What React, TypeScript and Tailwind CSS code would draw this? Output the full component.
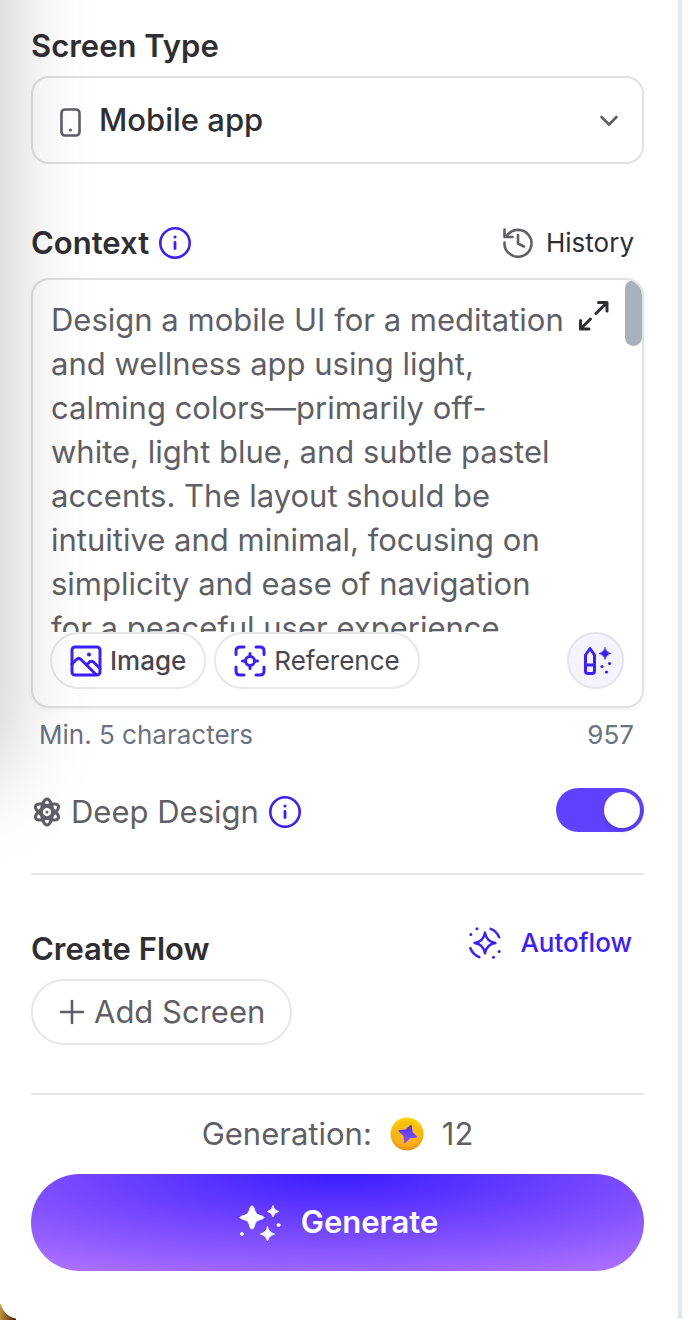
import { useState } from 'react';
import type { ReactNode } from 'react';

const initialPrompt =
  'Design a mobile UI for a meditation and wellness app using light, calming colors—primarily off-white, light blue, and subtle pastel accents. The layout should be intuitive and minimal, focusing on simplicity and ease of navigation for a peaceful user experience.';

type IconProps = {
  size: number;
  className?: string;
  strokeWidth?: number;
  children: ReactNode;
};

function Icon({ size, className = '', strokeWidth = 3, children }: IconProps) {
  return (
    <svg
      width={size}
      height={size}
      viewBox={`0 0 ${size} ${size}`}
      fill="none"
      stroke="currentColor"
      strokeWidth={strokeWidth}
      strokeLinecap="round"
      strokeLinejoin="round"
      aria-hidden="true"
      className={`shrink-0 ${className}`}
    >
      {children}
    </svg>
  );
}

function InfoButton({ label }: { label: string }) {
  return (
    <button type="button" aria-label={label} className="text-[#3d1eff]">
      <Icon size={34}>
        <circle cx="17" cy="17" r="14.700" strokeWidth="2.600" />
        <path d="M17 16.500v6" strokeWidth="2.800" />
        <circle cx="17" cy="11" r="1.600" fill="currentColor" stroke="none" />
      </Icon>
    </button>
  );
}

export default function App() {
  const [prompt, setPrompt] = useState(initialPrompt);
  const [deepDesign, setDeepDesign] = useState(true);

  return (
    <div className="relative bg-white pr-[10px] pb-px font-['Inter',sans-serif] text-[#5f5f66]">
      {/* Backdrop peeking out behind the rounded corner */}
      <div className="absolute bottom-0 left-0 h-4 w-4 bg-gradient-to-r from-[#c09540] to-[#4a1c0c]" />

      <main className="relative overflow-hidden rounded-bl-[20px] border-r-4 border-[#e1e8f0] bg-white pt-[26px] pr-[34px] pb-12 pl-[31px]">
        {/* Shadow cast by the neighbouring drawer */}
        <div className="pointer-events-none absolute -top-48 -left-24 z-10 h-[968px] w-24 shadow-[0_0_90px_rgba(0,0,0,0.25)]" />

        <label htmlFor="screen-type" className="block text-[31px] leading-10 font-semibold text-[#2e2e33]">
          Screen Type
        </label>
        <div className="relative mt-[10px]">
          <Icon size={32} strokeWidth={2.6} className="absolute top-[30px] left-6">
            <rect x="6.500" y="3.500" width="18" height="26" rx="3.500" />
            <circle cx="15.500" cy="24" r="1.500" fill="currentColor" stroke="none" />
          </Icon>
          <select
            id="screen-type"
            className="h-[88px] w-full appearance-none rounded-[18px] border-2 border-[#e1e1e3] bg-transparent pr-16 pl-[66px] text-[31px] font-medium text-[#2e2e33]"
          >
            <option>Mobile app</option>
          </select>
          <Icon size={24} strokeWidth={2.6} className="pointer-events-none absolute top-8 right-[23px]">
            <path d="m4.500 9 7.500 7.500L19.500 9" />
          </Icon>
        </div>

        <div className="mt-[59px] flex items-center justify-between pr-[10px]">
          <div className="flex items-center gap-[9px]">
            <label htmlFor="context" className="text-[31px] leading-10 font-semibold text-[#2e2e33]">
              Context
            </label>
            <InfoButton label="About context" />
          </div>
          <button type="button" className="flex items-center gap-3 text-[26px] leading-10 text-[#2e2e33]">
            <Icon size={32} className="text-[#5f5f66]" strokeWidth={2.6}>
              <path d="M2.500 15.500A13.500 13.500 0 1 0 5 8.500M2.500 2.500v7.500h8" />
              <path d="M16 8v8.500l6 3" />
            </Icon>
            History
          </button>
        </div>

        <div className="relative mt-[15px] overflow-hidden rounded-[18px] border-2 border-[#e1e1e3] shadow-[0_2px_4px_rgba(0,0,0,0.05)]">
          <textarea
            id="context"
            value={prompt}
            onChange={(e) => setPrompt(e.target.value)}
            className="block h-[352px] w-full resize-none overflow-hidden bg-transparent pt-[18px] pr-[72px] pl-[18px] text-[31px] leading-[44px] outline-none"
          />
          <button type="button" aria-label="Expand editor" className="absolute top-5 right-8 text-[#2e2e33]">
            <Icon size={32}>
              <path d="M20.500 2.500H29V11M29 2.500 18 13.500M2.500 20.500V29H11M2.500 29 12.500 19" />
            </Icon>
          </button>
          <span className="absolute top-0 right-0 h-[66px] w-[17px] rounded-full bg-[#a9b1ba]" />

          <div className="flex items-center gap-2 pr-[18px] pb-[17px] pl-[17px]">
            <button
              type="button"
              className="flex h-[57px] items-center gap-2 rounded-full border-2 border-[#e8e8ea] bg-white px-[18px] text-[26px] font-medium text-[#47474d]"
            >
              <Icon size={32} className="text-[#3d1eff]">
                <rect x="2" y="2" width="28" height="28" rx="3" />
                <path d="m2 19 4.500-4.500c1.500-1.500 3-1.500 4.500 0L26 29.500" />
                <path d="m17 19.500 2.500-2.500c1.200-1 2.600-1 4 0l6.500 6.500" />
                <circle cx="19" cy="9.500" r="2" fill="currentColor" stroke="none" />
              </Icon>
              Image
            </button>
            <button
              type="button"
              className="flex h-[57px] items-center gap-2 rounded-full border-2 border-[#e8e8ea] bg-white px-[18px] text-[26px] text-[#47474d]"
            >
              <Icon size={32} className="text-[#3d1eff]">
                <path d="M2 9.500V6q0-4 4-4h4M22 2h4q4 0 4 4v3.500M30 22v4q0 4-4 4h-4M10 30H6q-4 0-4-4v-4" />
                <circle cx="16" cy="16" r="4.500" />
                <path d="M16 8.500v3M16 20.500v3M8.500 16h3M20.500 16h3" />
              </Icon>
              Reference
            </button>
            <button
              type="button"
              aria-label="Enhance prompt"
              className="ml-auto flex h-[57px] w-[57px] items-center justify-center rounded-full border-2 border-[#e4e4e9] bg-[#f5f3ff] text-[#3d1eff]"
            >
              <Icon size={32}>
                <path d="M5.500 10 10 3.500l4.500 6.500v16q0 2.500-2.500 2.500H8q-2.500 0-2.500-2.500zM5.500 20h9" />
                <path
                  d="M25 2.500q1 4.800 6 6-5 1.200-6 6-1-4.800-6-6 5-1.200 6-6z"
                  fill="currentColor"
                  strokeWidth="0.500"
                />
                <g fill="currentColor" stroke="none">
                  <circle cx="22" cy="21.500" r="1.600" />
                  <circle cx="29.500" cy="18.500" r="1.600" />
                  <circle cx="26.500" cy="27" r="1.600" />
                </g>
              </Icon>
            </button>
          </div>
        </div>

        <div className="mt-[7px] flex justify-between pr-[10px] pl-2 text-[26px] leading-10 text-[#6b7280]">
          <span>Min. 5 characters</span>
          <span>957</span>
        </div>

        <div className="mt-[33px] flex h-11 items-center justify-between">
          <div className="flex items-center gap-[9px] self-end">
            <label htmlFor="deep-design" className="flex items-center gap-2 text-[31px] leading-10">
              <Icon size={32} strokeWidth={3}>
                <ellipse cx="16" cy="16" rx="5.500" ry="13" />
                <ellipse cx="16" cy="16" rx="5.500" ry="13" transform="rotate(60 16 16)" />
                <ellipse cx="16" cy="16" rx="5.500" ry="13" transform="rotate(120 16 16)" />
                <circle cx="16" cy="16" r="1.500" fill="currentColor" stroke="none" />
              </Icon>
              Deep Design
            </label>
            <InfoButton label="About deep design" />
          </div>
          <input
            id="deep-design"
            type="checkbox"
            role="switch"
            checked={deepDesign}
            onChange={(e) => setDeepDesign(e.target.checked)}
            className="flex h-11 w-[88px] appearance-none items-center rounded-full bg-gray-300 px-1 before:h-9 before:w-9 before:rounded-full before:bg-white before:shadow-md checked:justify-end checked:bg-[#5f41ff]"
          />
        </div>

        <hr className="mt-[41px] border-t-2 border-[#e7e7e9]" />

        <div className="mt-12 flex h-[46px] justify-between pr-3">
          <h2 className="self-end text-[31px] leading-10 font-semibold text-[#2e2e33]">Create Flow</h2>
          <button
            type="button"
            className="flex h-10 items-center gap-[18px] text-[26px] leading-10 font-medium text-[#3d1eff]"
          >
            <Icon size={36} strokeWidth={2.6} className="h-[34px] w-[34px]">
              <path d="M18 7q1.500 9.500 11 11-9.500 1.500-11 11-1.500-9.500-11-11 9.500-1.500 11-11z" />
              <path d="M24 3q6.500 2.500 9 9M2.500 23.500q2.500 6.500 9.500 9.500" />
              <g fill="currentColor" stroke="none">
                <circle cx="9.500" cy="3" r="1.600" />
                <circle cx="3" cy="9" r="1.600" />
                <circle cx="33" cy="27" r="1.600" />
                <circle cx="27" cy="33" r="1.600" />
              </g>
            </Icon>
            Autoflow
          </button>
        </div>
        <button
          type="button"
          className="mt-[10px] flex h-[66px] items-center gap-2 rounded-full border-2 border-[#e7e7e9] px-[25px] text-[31px]"
        >
          <Icon size={28} strokeWidth={2.6}>
            <path d="M14 3v22M3 14h22" />
          </Icon>
          Add Screen
        </button>

        <hr className="mt-12 border-t-2 border-[#e7e7e9]" />

        <div className="mt-[19px] flex items-center justify-center gap-[18px] text-[31px] leading-10">
          <span>Generation:</span>
          <svg width="34" height="34" viewBox="0 0 34 34" aria-hidden="true">
            <defs>
              <linearGradient id="coin-rim" x1="0" y1="0" x2="0" y2="1">
                <stop stopColor="#ffd500" />
                <stop offset="1" stopColor="#ef9510" />
              </linearGradient>
              <linearGradient id="coin-face" x1="0" y1="0" x2="0" y2="1">
                <stop stopColor="#f5c40a" />
                <stop offset="1" stopColor="#ffab1c" />
              </linearGradient>
              <linearGradient id="coin-star" x1="0" y1="0" x2="0" y2="1">
                <stop stopColor="#4b2cff" />
                <stop offset="1" stopColor="#8a5be8" />
              </linearGradient>
            </defs>
            <circle cx="17" cy="17" r="16.500" fill="url(#coin-rim)" />
            <circle cx="17" cy="17" r="13.500" fill="url(#coin-face)" />
            <path
              d="M20.500 8q1-.5 1.200.7l.8 6.300 4.500 4.500q.6 1-.6 1.200l-6.200.6-4.800 4.700q-1.200.8-1.400-.6l-.3-6.400-5-4.500q-.8-1 .5-1.500l6.300-.5z"
              fill="url(#coin-star)"
            />
          </svg>
          <span>12</span>
        </div>

        <button
          type="button"
          className="mt-5 flex h-[97px] w-full items-center justify-center gap-5 rounded-full bg-[radial-gradient(85%_115%_at_50%_0%,#3b1cff,#ab70ff)] text-[31px] font-semibold text-white"
        >
          <Icon size={44} strokeWidth={1}>
            <g fill="currentColor">
              <path d="M15 5q2 0 2.500 4 .8 4.700 5.500 5.500 4 .8 4 2t-4 2q-4.700.8-5.500 5.500-.5 4-2.500 4t-2.500-4q-.8-4.700-5.500-5.500-4-.8-4-2t4-2q4.700-.8 5.500-5.500.5-4 2.500-4z" />
              <path d="M36 5q.8 4.500 5.500 5.500-4.700 1-5.500 5.500-.8-4.500-5.500-5.500Q35.200 9.500 36 5z" />
              <path d="M30.500 26q1.200 5.500 7 7-5.800 1.500-7 7-1.200-5.500-7-7 5.800-1.500 7-7z" />
              <circle cx="41.500" cy="24" r="1.500" />
              <circle cx="5" cy="33" r="1.500" />
            </g>
          </Icon>
          Generate
        </button>
      </main>
    </div>
  );
}
